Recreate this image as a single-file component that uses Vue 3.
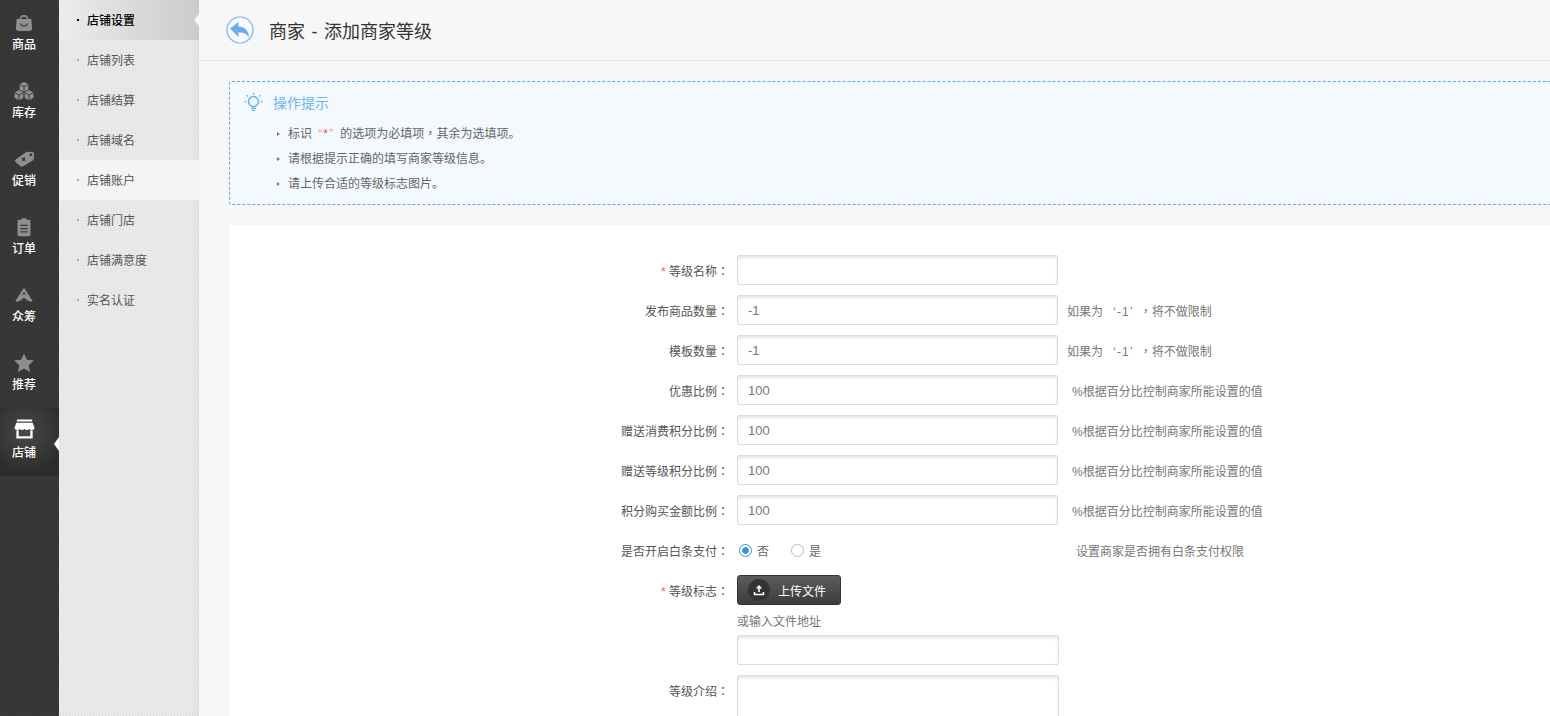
<template>
  <div class="layout">
    <!-- Main nav -->
    <nav class="sidebar">
      <a v-for="item in navItems" :key="item.label" class="nav-item" :class="{ active: item.active }">
        <svg class="nav-icon" viewBox="0 0 24 24" v-html="item.icon"></svg>
        <span>{{ item.label }}</span>
      </a>
    </nav>

    <!-- Sub nav -->
    <aside class="subnav">
      <a
        v-for="(item, i) in subItems"
        :key="item"
        class="sub-item"
        :class="{ current: i === 0, hover: i === 4 }"
      >{{ item }}</a>
    </aside>

    <main class="main">
      <header class="page-head">
        <svg class="back" viewBox="0 0 28 28">
          <circle cx="14" cy="14" r="13" fill="#fafcff" stroke="#6db3f7" stroke-width="1.2" />
          <path d="M4 12.5 12.5 6v4.500c6 0 10 3.500 10.500 11-2.500-3.800-5.500-5.300-10.500-5v4.500z" fill="#6aaef0" />
        </svg>
        <h1>商家 - 添加商家等级</h1>
      </header>

      <section class="tips">
        <div class="tips-title">
          <svg class="bulb" viewBox="0 0 22 22" fill="none" stroke="#6db3f7" stroke-width="1.4">
            <circle cx="11" cy="10" r="5.200" stroke-width="1.600" />
            <path d="M8.500 17h5M9.300 19.200h3.400M11 1v2M3.800 3.300l1.400 1.400M18.200 3.300l-1.400 1.400M1.500 10h2M18.500 10h2" />
          </svg>
          <span>操作提示</span>
        </div>
        <ul>
          <li>标识 <em>“<b>*</b>”</em> 的选项为必填项<span class="mid">，</span>其余为选填项。</li>
          <li>请根据提示正确的填写商家等级信息。</li>
          <li>请上传合适的等级标志图片。</li>
        </ul>
      </section>

      <form class="form" @submit.prevent>
        <div v-for="row in rows" :key="row.label" class="row">
          <label><i v-if="row.required">*</i> {{ row.label }}<span class="mid">：</span></label>
          <input class="text" :value="row.value" />
          <span v-if="row.note === 'limit'" class="note">如果为<span class="quote">‘-1’</span><span class="mid">，</span>将不做限制</span>
          <span v-else-if="row.note === 'pct'" class="note pct">%根据百分比控制商家所能设置的值</span>
        </div>

        <div class="row">
          <label>是否开启白条支付<span class="mid">：</span></label>
          <div class="radios">
            <span class="radio on"></span><span class="radio-text">否</span>
            <span class="radio"></span><span class="radio-text">是</span>
          </div>
          <span class="note white">设置商家是否拥有白条支付权限</span>
        </div>

        <div class="row upload-row">
          <label><i>*</i> 等级标志<span class="mid">：</span></label>
          <div class="upload-col">
            <button type="button" class="upload">
              <span class="upload-icon">
                <svg viewBox="0 0 14 14" fill="none" stroke="#fff" stroke-width="1.600">
                  <path d="M7 9V3.500M4.800 5.500 7 3.200l2.200 2.300" />
                  <path d="M2.500 9v2.500h9V9" />
                </svg>
              </span>
              上传文件
            </button>
            <div class="or">或输入文件地址</div>
            <input class="text wide" />
          </div>
        </div>

        <div class="row area-row">
          <label>等级介绍<span class="mid">：</span></label>
          <textarea class="text wide area"></textarea>
        </div>
      </form>
    </main>
  </div>
</template>

<script setup>
const navItems = [
  {
    label: '商品',
    icon: '<path d="M7 9C7 1.500 17 1.500 17 9h-1.600C15.400 4 8.600 4 8.600 9z"/><path fill-rule="evenodd" d="M4 7.500h16l.8 10a3 3 0 0 1-3 3.200H6.200a3 3 0 0 1-3-3.200zM7.500 12.500c1 4.500 8 4.500 9 0h-1.300c-1 2.800-5.400 2.800-6.400 0z"/>'
  },
  {
    label: '库存',
    icon: '<path d="M12 2l4.800 2.750v5.500L12 13l-4.800-2.750v-5.500zM6.500 11l4.800 2.750v5.500L6.500 22l-4.800-2.750v-5.500zM17.500 11l4.800 2.750v5.500L17.500 22l-4.800-2.750v-5.500z"/><path fill="none" stroke="#363636" d="M7.200 4.750 12 7.500l4.800-2.750M12 7.500V13M1.700 13.750l4.800 2.750 4.800-2.750M6.500 16.500V22M12.700 13.750l4.800 2.750 4.800-2.750M17.500 16.500V22"/>'
  },
  {
    label: '促销',
    icon: '<path fill-rule="evenodd" d="M3 12.500 13.500 5Q15 4 17 4l5.500.5.500 5.500q0 2-1.500 3.500L11 20q-1.500 1-3-.5L2.500 15q-1-1.500.5-2.500zM19.500 6a1.500 1.500 0 1 0 0 3 1.500 1.500 0 0 0 0-3zM9 11.500l1.500 1-1 1.500 1.200.8 1-1.500 1.500 1 .8-1.200-1.500-1 1-1.500-1.200-.8-1 1.500-1.500-1z"/>'
  },
  {
    label: '订单',
    icon: '<path fill-rule="evenodd" d="M9.500 4V2.500h5V4h3A1.500 1.500 0 0 1 19 5.500v15a1.500 1.500 0 0 1-1.500 1.500h-11A1.500 1.500 0 0 1 5 20.500v-15A1.500 1.500 0 0 1 6.500 4zM8 9.500V11h8V9.500zm0 3.500v1.500h8V13zm0 3.500V18h8v-1.500z"/>'
  },
  {
    label: '众筹',
    icon: '<path fill-rule="evenodd" d="M12 4 21.500 18.500q-3 1.500-5.500-.5L12 15l-4 3q-2.500 2-5.500.5zM12 8.500l-2.500 3.700L12 11l2.500 1.200z"/>'
  },
  {
    label: '推荐',
    icon: '<path d="m12 1.500 3.200 7 7.600.8-5.700 5.100 1.600 7.500L12 18.100l-6.700 3.800 1.600-7.500-5.700-5.100 7.600-.8z"/>'
  },
  {
    label: '店铺',
    active: true,
    icon: '<path d="M4 2h16v2.200H4zM3.500 5.500h17l2 5.500a3 3 0 0 1-5.300 1 3.500 3.500 0 0 1-5.200 0 3.500 3.500 0 0 1-5.200 0 3 3 0 0 1-5.300-1z"/><path d="M3.500 13.500H6V19.500h12v-6h2.500V22h-17z"/>'
  }
]

const subItems = ['店铺设置', '店铺列表', '店铺结算', '店铺域名', '店铺账户', '店铺门店', '店铺满意度', '实名认证']

const rows = [
  { label: '等级名称', required: true, value: '' },
  { label: '发布商品数量', value: '-1', note: 'limit' },
  { label: '模板数量', value: '-1', note: 'limit' },
  { label: '优惠比例', value: '100', note: 'pct' },
  { label: '赠送消费积分比例', value: '100', note: 'pct' },
  { label: '赠送等级积分比例', value: '100', note: 'pct' },
  { label: '积分购买金额比例', value: '100', note: 'pct' }
]
</script>

<style>
html, body {
  margin: 0;
  height: 100%;
  overflow: hidden;
}
</style>

<style scoped>
* {
  box-sizing: border-box;
}

.layout {
  display: flex;
  height: 716px;
  overflow: hidden;
  font-family: "Liberation Sans", "Noto Sans CJK SC", sans-serif;
  font-size: 12px;
  color: #666;
  background: #f7f7f7;
}

.mid {
  font-family: "Noto Sans CJK TC", sans-serif;
  line-height: 0;
}

/* Main nav */
.sidebar {
  width: 59px;
  flex: none;
  background-color: #363636;
  background-image: radial-gradient(rgba(255, 255, 255, 0.035) 0.7px, transparent 0.8px);
  background-size: 3px 3px;
}

.nav-item {
  position: relative;
  display: flex;
  flex-direction: column;
  align-items: center;
  height: 68px;
  padding: 12px 11px 0 0;
  color: #fff;
  font-weight: 500;
  line-height: 18px;
}

.nav-icon {
  width: 22px;
  height: 22px;
  margin-bottom: 2px;
  fill: #8f8f8f;
}

.nav-item.active {
  background: radial-gradient(circle at 42% 35%, #484848 0, #2c2c2c 75%);
}

.nav-item.active .nav-icon {
  fill: #fff;
  width: 23px;
  height: 24px;
  margin-top: -3px;
  margin-bottom: 3px;
}

.nav-item.active::after {
  content: "";
  position: absolute;
  right: 0;
  top: 29px;
  border: 7px solid transparent;
  border-right: 5px solid #fff;
  border-left: 0;
}

/* Sub nav */
.subnav {
  width: 140px;
  flex: none;
  background-color: #e9e9e9;
  background-image: radial-gradient(#dedede 0.6px, transparent 0.7px);
  background-size: 3px 3px;
  box-shadow: inset -10px 0 8px -8px #dcdcdc;
}

.sub-item {
  position: relative;
  display: block;
  height: 40px;
  padding-left: 28px;
  line-height: 42px;
  color: #555;
}

.sub-item::before {
  content: "";
  position: absolute;
  left: 18px;
  top: 19px;
  width: 2px;
  height: 2px;
  background: #aaa;
}

.sub-item.current {
  color: #000;
  font-weight: 500;
  background: linear-gradient(to right, #ececec, #cbcbcb);
}

.sub-item.current::before {
  background: #000;
}

.sub-item.current::after {
  content: "";
  position: absolute;
  right: 0;
  top: 14px;
  border: 6px solid transparent;
  border-right: 5px solid #f7f7f7;
  border-left: 0;
}

.sub-item.hover {
  background: #f3f3f3;
}

/* Content */
.main {
  flex: 1;
  min-width: 0;
  padding-left: 30px;
}

.page-head {
  display: flex;
  align-items: center;
  height: 61px;
  margin-left: -30px;
  padding-left: 27px;
  border-bottom: 1px solid #e6e6e6;
}

.back {
  width: 28px;
  height: 28px;
  margin-right: 15px;
}

h1 {
  margin: 0;
  font-size: 18px;
  font-weight: 400;
  word-spacing: 1.5px;
  color: #333;
}

.tips {
  height: 124px;
  margin-top: 20px;
  margin-right: -4px;
  padding: 9px 13px;
  border: 1px dashed #5caaf5;
  border-radius: 3px;
  background: #f4f9fe;
}

.tips-title {
  display: flex;
  align-items: center;
  height: 22px;
  font-size: 14px;
  color: #6db3f7;
}

.bulb {
  width: 21px;
  height: 21px;
  margin-right: 9px;
}

.tips ul {
  margin: 9px 0 0;
  padding: 0 0 0 45px;
  list-style: none;
}

.tips li {
  position: relative;
  height: 25px;
  line-height: 25px;
}

.tips li::before {
  content: "";
  position: absolute;
  left: -11px;
  top: 10px;
  border: 2.5px solid transparent;
  border-left: 3px solid #777;
  border-right: 0;
}

.tips em {
  padding: 0 3px;
  font-style: normal;
  letter-spacing: 1px;
  color: #e99;
}

.tips b {
  font-weight: 400;
  color: #e44;
}

.form {
  height: 491px;
  margin-top: 20px;
  padding-top: 30px;
  background: #fff;
  overflow: hidden;
}

.row {
  display: flex;
  align-items: flex-start;
  height: 30px;
  margin-bottom: 10px;
}

.row label {
  flex: none;
  width: 500px;
  padding-top: 2px;
  line-height: 30px;
  text-align: right;
  color: #555;
}

.row label i {
  font-style: normal;
  color: #e66;
}

.text {
  display: block;
  flex: none;
  width: 321px;
  height: 30px;
  margin-left: 8px;
  padding: 1px 10px 0;
  border: 1px solid #dcdcdc;
  border-radius: 2px;
  box-shadow: inset 0 2px 3px rgba(0, 0, 0, 0.1);
  font-family: inherit;
  font-size: 13px;
  color: #777;
  outline: none;
}

.text.wide {
  width: 322px;
}

.note {
  margin-left: 9px;
  padding-top: 2px;
  line-height: 30px;
  color: #777;
}

.note.pct {
  margin-left: 14px;
}

.note.white {
  margin-left: 0;
  padding-left: 108px;
}

.quote {
  margin: 0 6px 0 10px;
  letter-spacing: 1.2px;
}

.radios {
  display: flex;
  align-items: center;
  width: 229px;
  height: 30px;
  margin-left: 10px;
}

.radio {
  width: 13px;
  height: 13px;
  border: 1px solid #bbb;
  border-radius: 50%;
  background: #fff;
}

.radio.on {
  border-color: #3c8fdc;
  background: radial-gradient(circle, #3c8fdc 0 3px, #fff 3.5px);
}

.radio-text {
  margin-left: 5px;
  margin-right: 22px;
}

.upload-row {
  height: 90px;
}

.upload-col {
  margin-left: 8px;
}

.upload-col .text {
  margin-left: 0;
}

.upload {
  display: flex;
  align-items: center;
  width: 104px;
  height: 30px;
  padding: 0 0 0 10px;
  border: 1px solid #333;
  border-radius: 3px;
  background: linear-gradient(#5c5c5c, #3c3c3c);
  font-family: inherit;
  font-size: 12px;
  color: #fff;
}

.upload-icon {
  display: flex;
  align-items: center;
  justify-content: center;
  width: 22px;
  height: 22px;
  margin-right: 8px;
  border-radius: 50%;
  background: #333;
}

.upload-icon svg {
  width: 14px;
  height: 14px;
}

.or {
  height: 30px;
  padding-top: 9px;
  line-height: 16px;
  color: #777;
}

.area-row {
  height: 100px;
}

.area {
  height: 100px;
  resize: none;
}
</style>
